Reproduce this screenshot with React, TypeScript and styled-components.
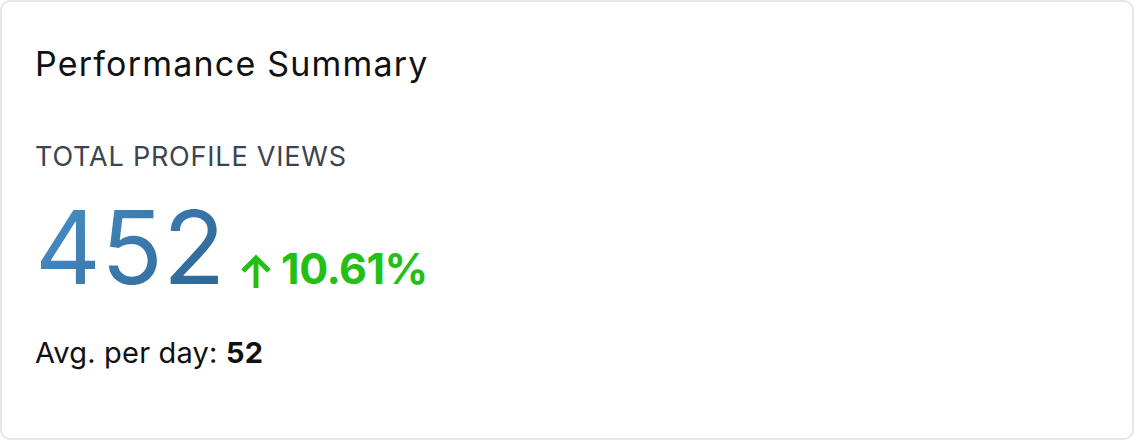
import React from "react";
import styled, { createGlobalStyle } from "styled-components";

const Global = createGlobalStyle`
  html, body { margin: 0; padding: 0; background: #ffffff; }
  body { font-family: Inter, "Noto Sans", sans-serif; }
`;

const Card = styled.section`
  box-sizing: border-box;
  width: 1134px;
  height: 440px;
  border: 2px solid #e7e7e7;
  border-radius: 10px;
  background: #fff;
  padding: 40px 33px;
  display: flex;
  flex-direction: column;
`;

const Title = styled.h2`
  margin: 0;
  font-size: 34px;
  font-weight: 400;
  color: #111;
  letter-spacing: 1.2px;
  line-height: 44px;
`;

const Label = styled.div`
  margin-top: 55px;
  font-size: 27px;
  font-weight: 400;
  color: #3b4451;
  letter-spacing: 0.8px;
  line-height: 32px;
`;

const ValueRow = styled.div`
  display: flex;
  align-items: baseline;
  gap: 14px;
  margin-top: 19px;
`;

const BigNumber = styled.span`
  font-size: 102px;
  font-weight: 400;
  line-height: 110px;
  background: linear-gradient(135deg, #4a92cc 0%, #2c6290 100%);
  -webkit-background-clip: text;
  background-clip: text;
  color: transparent;
  letter-spacing: 0px;
`;

const Change = styled.span`
  display: inline-flex;
  align-items: baseline;
  gap: 8px;
  color: #22c015;
  font-size: 43px;
  font-weight: 700;
  letter-spacing: -0.5px;
`;

const Arrow = styled.svg`
  width: 34px;
  height: 36px;
  align-self: center;
  transform: translateY(4px);
`;

const Avg = styled.div`
  margin-top: 33px;
  font-size: 29px;
  color: #111;
  letter-spacing: 0.2px;
  line-height: 36px;
  b { font-weight: 700; }
`;

export default function App() {
  return (
    <>
      <Global />
      <Card>
        <Title>Performance Summary</Title>
        <Label>TOTAL PROFILE VIEWS</Label>
        <ValueRow>
          <BigNumber>452</BigNumber>
          <Change>
            <Arrow viewBox="0 0 34 36" fill="none" stroke="#22c015" strokeWidth="5" strokeLinecap="butt" strokeLinejoin="miter">
              <path d="M17 34V4" />
              <path d="M4 17L17 4L30 17" />
            </Arrow>
            10.61%
          </Change>
        </ValueRow>
        <Avg>
          Avg. per day: <b>52</b>
        </Avg>
      </Card>
    </>
  );
}
